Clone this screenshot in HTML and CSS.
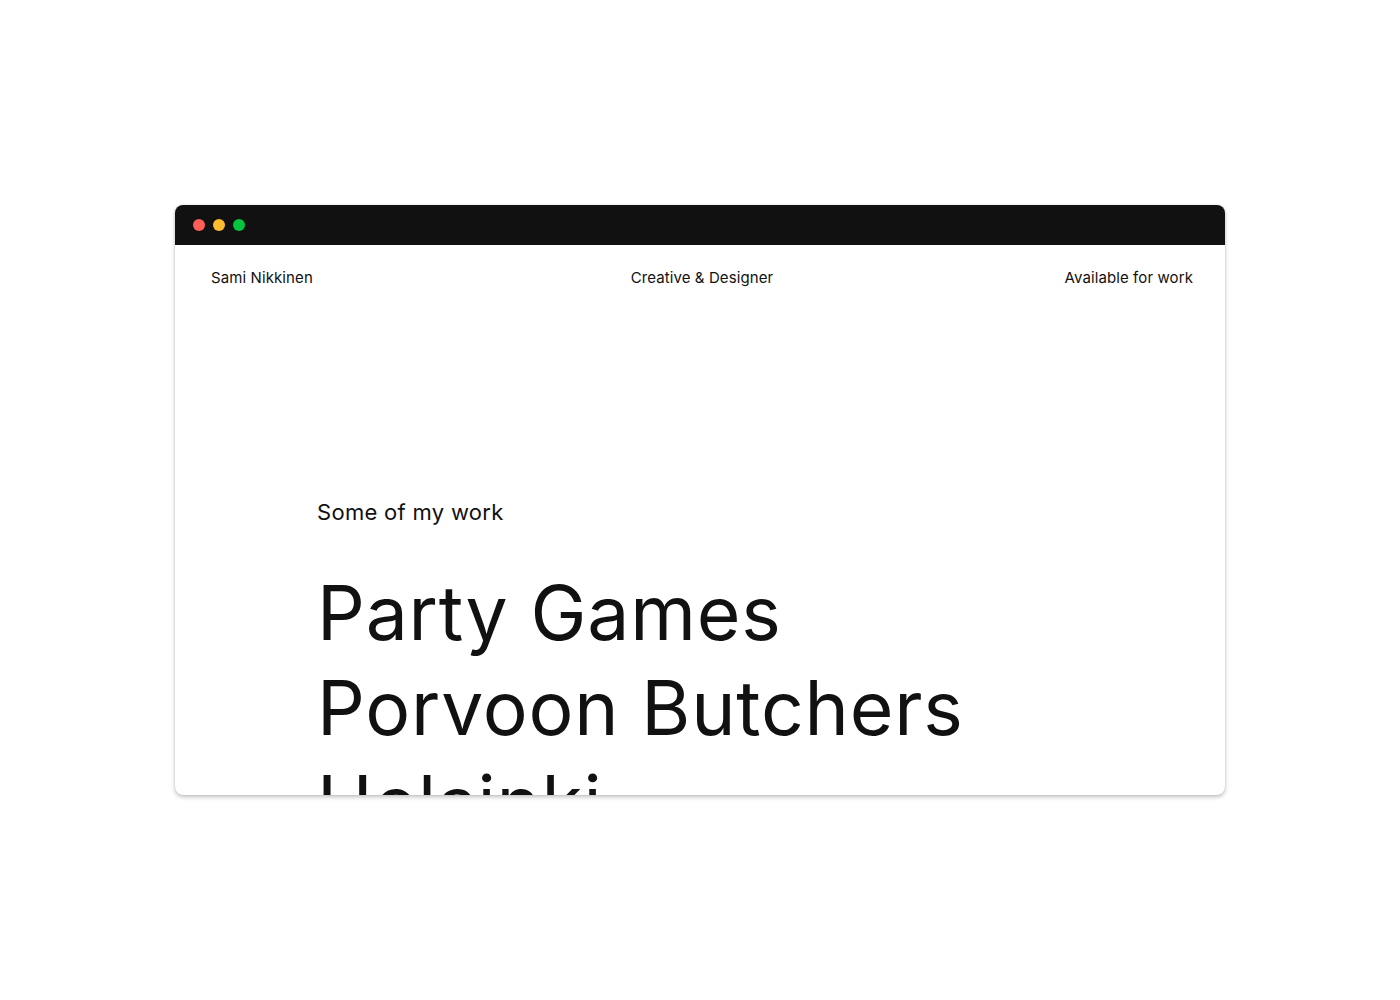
FILE: index.html
```html
<!DOCTYPE html>
<html lang="en">
<head>
<meta charset="utf-8">
<title>Sami Nikkinen</title>
<link rel="stylesheet" href="styles.css">
</head>
<body>
<div class="stage">
  <div class="window">
    <div class="titlebar">
      <span class="dot dot-red"></span>
      <span class="dot dot-yellow"></span>
      <span class="dot dot-green"></span>
    </div>
    <div class="page">
      <header class="site-header">
        <span class="name">Sami Nikkinen</span>
        <span class="role">Creative &amp; Designer</span>
        <span class="status">Available for work</span>
      </header>
      <section class="work">
        <h2 class="work-label">Some of my work</h2>
        <ul class="work-list">
          <li>Party Games</li>
          <li>Porvoon Butchers</li>
          <li>Helsinki</li>
        </ul>
      </section>
    </div>
  </div>
</div>
</body>
</html>
```

FILE: styles.css
```css
* { box-sizing: border-box; }
html, body { margin: 0; padding: 0; background: #fff; }
body { font-family: Inter, "Liberation Sans", sans-serif; color: #111; }
.stage {
  width: 1400px;
  height: 1000px;
  display: flex;
  justify-content: center;
  padding-top: 205px;
}
.window {
  width: 1050px;
  height: 590px;
  border-radius: 8px;
  overflow: hidden;
  background: #fff;
  box-shadow: 0 2px 4px rgba(0,0,0,0.25), 0 0 1px rgba(0,0,0,0.2);
  display: flex;
  flex-direction: column;
}
.titlebar {
  height: 40px;
  background: #111;
  display: flex;
  align-items: center;
  gap: 8px;
  padding-left: 18px;
  flex-shrink: 0;
}
.dot { width: 12px; height: 12px; border-radius: 50%; }
.dot-red { background: #ff5f57; }
.dot-yellow { background: #febc2e; }
.dot-green { background: #05c53f; }
.page { flex: 1; overflow: hidden; }
.site-header {
  display: grid;
  grid-template-columns: 1fr auto 1fr;
  align-items: center;
  padding: 23px 32px 0 36px;
  font-size: 15px;
  line-height: 20px;
  letter-spacing: 0.1px;
}
.name { justify-self: start; }
.role { justify-self: center; }
.status { justify-self: end; }
.work { padding: 209px 0 0 142px; }
.work-label {
  margin: 0 0 38px;
  font-weight: 400;
  font-size: 22px;
  line-height: 30px;
  letter-spacing: 0.3px;
}
.work-list {
  list-style: none;
  margin: 0;
  padding: 0;
  font-size: 75px;
  line-height: 95px;
  letter-spacing: 0.8px;
}
```
